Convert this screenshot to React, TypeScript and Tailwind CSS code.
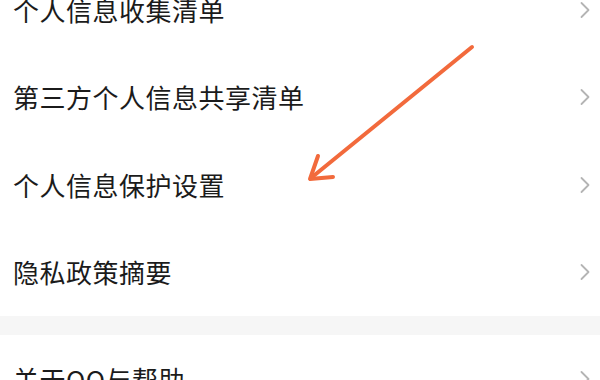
const rows = ['个人信息收集清单', '第三方个人信息共享清单', '个人信息保护设置', '隐私政策摘要'];

function Chevron() {
  return (
    <svg width="12" height="18" viewBox="0 0 12 18" className="shrink-0">
      <path d="M2.5 2 L9.5 9 L2.5 16" fill="none" stroke="#b4b4b4" strokeWidth="1.8" strokeLinecap="round" strokeLinejoin="round" />
    </svg>
  );
}

function Row({ label }: { label: string }) {
  return (
    <div className="h-[87.5px] flex items-center justify-between pl-[13px] pr-[9px] bg-white">
      <span className="text-[26px] leading-none text-[#1b1b1b] tracking-[0.5px]">{label}</span>
      <Chevron />
    </div>
  );
}

export default function App() {
  return (
    <div
      className="relative w-[600px] h-[380px] overflow-hidden bg-white"
      style={{ fontFamily: '"Noto Sans CJK SC", "Noto Sans", sans-serif' }}
    >
      <div className="mt-[-34px] flex flex-col">
        {rows.map((r) => (
          <Row key={r} label={r} />
        ))}
        <div className="h-[19px] bg-[#f6f6f6]" />
        <Row label="关于QQ与帮助" />
      </div>
      <svg className="absolute left-0 top-0 pointer-events-none" width="600" height="380">
        <g stroke="#f26a3c" strokeWidth="4" strokeLinecap="round" strokeLinejoin="round" fill="none">
          <path d="M472 47 L311 178" />
          <path d="M318 156 L310 179 L333 177" />
        </g>
      </svg>
    </div>
  );
}
